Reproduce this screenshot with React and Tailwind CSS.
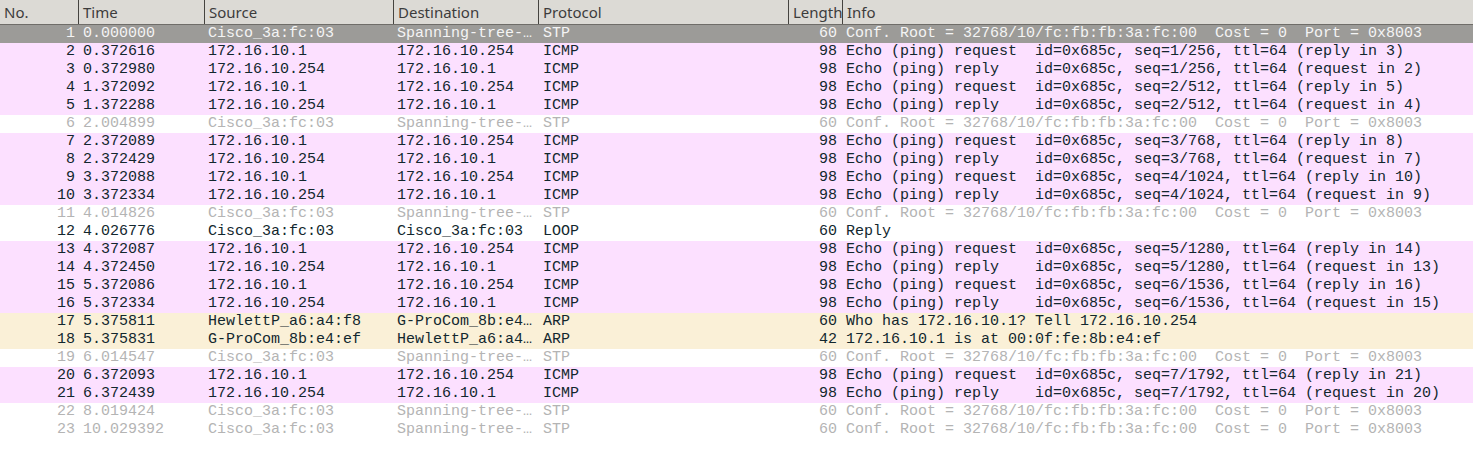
import React from 'react';

const COLS = [
  { key: 'no', label: 'No.', w: 'w-[79px]', align: 'text-right pr-[4px]' },
  { key: 'time', label: 'Time', w: 'w-[126px]', align: 'pl-[4px]' },
  { key: 'src', label: 'Source', w: 'w-[189px]', align: 'pl-[3px]' },
  { key: 'dst', label: 'Destination', w: 'w-[145px]', align: 'pl-[3px]' },
  { key: 'proto', label: 'Protocol', w: 'w-[250px]', align: 'pl-[4px]' },
  { key: 'len', label: 'Length', w: 'w-[54px]', align: 'text-right pr-[6px]' },
  { key: 'info', label: 'Info', w: 'flex-1', align: 'pl-[3px]' },
];

const STP_INFO = 'Conf. Root = 32768/10/fc:fb:fb:3a:fc:00  Cost = 0  Port = 0x8003';

// kind: sel | icmp | arp | stp | plain
const packets = [
  ['sel', 1, '0.000000', 'Cisco_3a:fc:03', 'Spanning-tree-…', 'STP', 60, STP_INFO],
  ['icmp', 2, '0.372616', '172.16.10.1', '172.16.10.254', 'ICMP', 98, 'Echo (ping) request  id=0x685c, seq=1/256, ttl=64 (reply in 3)'],
  ['icmp', 3, '0.372980', '172.16.10.254', '172.16.10.1', 'ICMP', 98, 'Echo (ping) reply    id=0x685c, seq=1/256, ttl=64 (request in 2)'],
  ['icmp', 4, '1.372092', '172.16.10.1', '172.16.10.254', 'ICMP', 98, 'Echo (ping) request  id=0x685c, seq=2/512, ttl=64 (reply in 5)'],
  ['icmp', 5, '1.372288', '172.16.10.254', '172.16.10.1', 'ICMP', 98, 'Echo (ping) reply    id=0x685c, seq=2/512, ttl=64 (request in 4)'],
  ['stp', 6, '2.004899', 'Cisco_3a:fc:03', 'Spanning-tree-…', 'STP', 60, STP_INFO],
  ['icmp', 7, '2.372089', '172.16.10.1', '172.16.10.254', 'ICMP', 98, 'Echo (ping) request  id=0x685c, seq=3/768, ttl=64 (reply in 8)'],
  ['icmp', 8, '2.372429', '172.16.10.254', '172.16.10.1', 'ICMP', 98, 'Echo (ping) reply    id=0x685c, seq=3/768, ttl=64 (request in 7)'],
  ['icmp', 9, '3.372088', '172.16.10.1', '172.16.10.254', 'ICMP', 98, 'Echo (ping) request  id=0x685c, seq=4/1024, ttl=64 (reply in 10)'],
  ['icmp', 10, '3.372334', '172.16.10.254', '172.16.10.1', 'ICMP', 98, 'Echo (ping) reply    id=0x685c, seq=4/1024, ttl=64 (request in 9)'],
  ['stp', 11, '4.014826', 'Cisco_3a:fc:03', 'Spanning-tree-…', 'STP', 60, STP_INFO],
  ['plain', 12, '4.026776', 'Cisco_3a:fc:03', 'Cisco_3a:fc:03', 'LOOP', 60, 'Reply'],
  ['icmp', 13, '4.372087', '172.16.10.1', '172.16.10.254', 'ICMP', 98, 'Echo (ping) request  id=0x685c, seq=5/1280, ttl=64 (reply in 14)'],
  ['icmp', 14, '4.372450', '172.16.10.254', '172.16.10.1', 'ICMP', 98, 'Echo (ping) reply    id=0x685c, seq=5/1280, ttl=64 (request in 13)'],
  ['icmp', 15, '5.372086', '172.16.10.1', '172.16.10.254', 'ICMP', 98, 'Echo (ping) request  id=0x685c, seq=6/1536, ttl=64 (reply in 16)'],
  ['icmp', 16, '5.372334', '172.16.10.254', '172.16.10.1', 'ICMP', 98, 'Echo (ping) reply    id=0x685c, seq=6/1536, ttl=64 (request in 15)'],
  ['arp', 17, '5.375811', 'HewlettP_a6:a4:f8', 'G-ProCom_8b:e4…', 'ARP', 60, 'Who has 172.16.10.1? Tell 172.16.10.254'],
  ['arp', 18, '5.375831', 'G-ProCom_8b:e4:ef', 'HewlettP_a6:a4…', 'ARP', 42, '172.16.10.1 is at 00:0f:fe:8b:e4:ef'],
  ['stp', 19, '6.014547', 'Cisco_3a:fc:03', 'Spanning-tree-…', 'STP', 60, STP_INFO],
  ['icmp', 20, '6.372093', '172.16.10.1', '172.16.10.254', 'ICMP', 98, 'Echo (ping) request  id=0x685c, seq=7/1792, ttl=64 (reply in 21)'],
  ['icmp', 21, '6.372439', '172.16.10.254', '172.16.10.1', 'ICMP', 98, 'Echo (ping) reply    id=0x685c, seq=7/1792, ttl=64 (request in 20)'],
  ['stp', 22, '8.019424', 'Cisco_3a:fc:03', 'Spanning-tree-…', 'STP', 60, STP_INFO],
  ['stp', 23, '10.029392', 'Cisco_3a:fc:03', 'Spanning-tree-…', 'STP', 60, STP_INFO],
];

const rowStyle = {
  sel: 'bg-[#9c9b98] text-[#f4f4f4]',
  icmp: 'bg-[#fce0ff] text-[#12272e]',
  arp: 'bg-[#faf0d7] text-[#12272e]',
  stp: 'bg-white text-[#b4b4b4]',
  plain: 'bg-white text-[#12272e]',
};

const HeaderRow = () => (
  <div className="flex h-[25px] bg-[#dcdad5] border-b border-[#6f6d69] text-[15px] text-[#3c3c3c] font-['Noto_Sans',sans-serif]">
    {COLS.map((c, i) => (
      <div
        key={c.key}
        className={`${c.w} shrink-0 flex items-center pl-[4px] whitespace-nowrap overflow-hidden ${
          i < COLS.length - 1 ? 'border-r border-[#45433f]' : ''
        }`}
      >
        {c.label}
      </div>
    ))}
  </div>
);

const PacketRow = ({ p }) => {
  const [kind, ...vals] = p;
  return (
    <div className={`flex h-[18px] items-center ${rowStyle[kind]}`}>
      {COLS.map((c, i) => (
        <div key={c.key} className={`${c.w} shrink-0 whitespace-pre overflow-hidden ${c.align}`}>
          {vals[i]}
        </div>
      ))}
    </div>
  );
};

export default function App() {
  return (
    <div className="w-[1473px] h-[450px] bg-white overflow-hidden">
      <HeaderRow />
      <div className="font-['Liberation_Mono',monospace] text-[15px] leading-[18px]">
        {packets.map((p) => (
          <PacketRow key={p[1]} p={p} />
        ))}
      </div>
    </div>
  );
}
